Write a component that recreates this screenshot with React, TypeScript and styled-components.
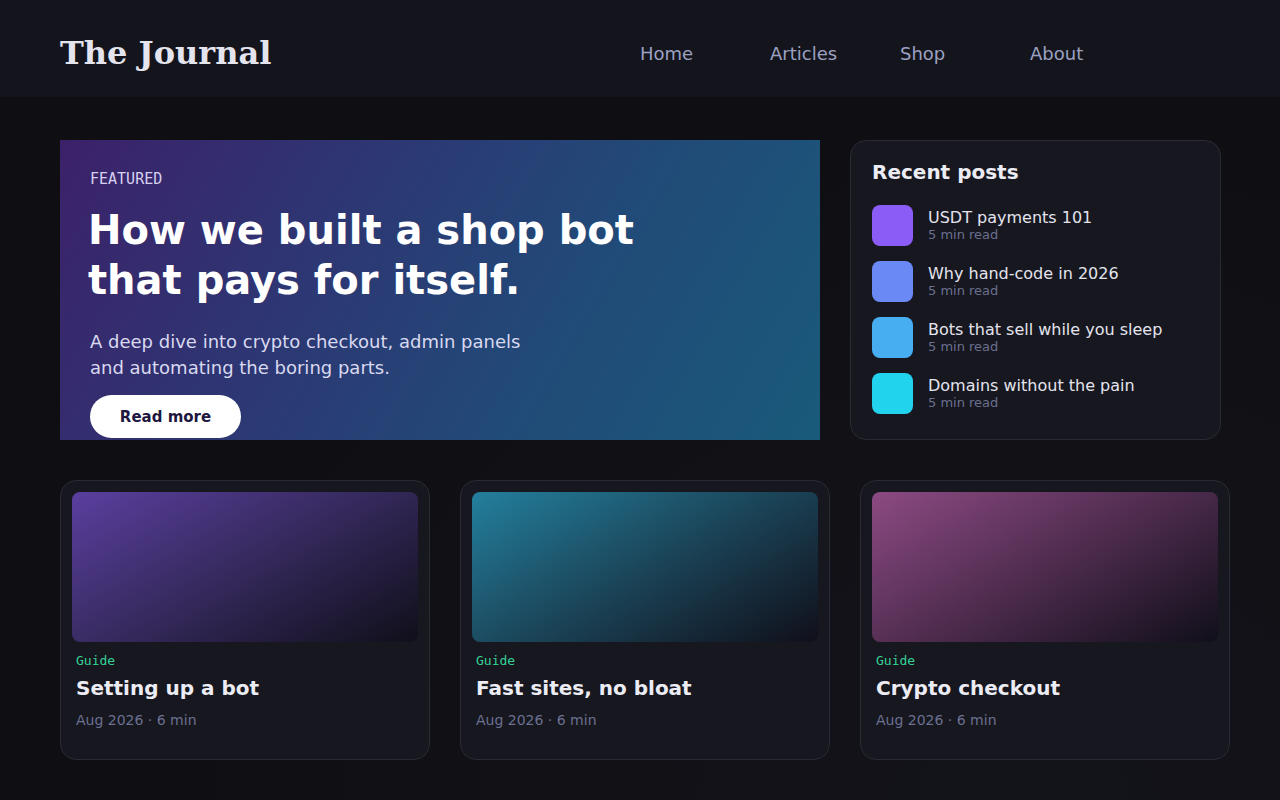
import { FC } from "react";
import styled, { createGlobalStyle } from "styled-components";

const GlobalStyle = createGlobalStyle`
  html, body {
    margin: 0;
    padding: 0;
  }
  body {
    min-height: 800px;
    background: radial-gradient(ellipse at 80% 100%, #13131a 0%, #0f0f13 60%) #0f0f13;
    font-family: "DejaVu Sans", "Liberation Sans", sans-serif;
    color: #e8e8f0;
  }
`;

const Header = styled.header`
  height: 97px;
  box-sizing: border-box;
  background: #14151c;
  display: flex;
  align-items: center;
  padding: 9px 60px 0;
`;

const Logo = styled.h1`
  margin: 0;
  font-family: "DejaVu Serif", "Liberation Serif", serif;
  font-size: 32px;
  font-weight: 700;
  color: #e4e4ee;
`;

const Nav = styled.nav`
  margin-left: auto;
  margin-right: 60px;
  display: grid;
  grid-template-columns: repeat(4, 130px);
`;

const NavLink = styled.a`
  font-size: 18px;
  color: #9ca1c2;
  text-decoration: none;
`;

const Main = styled.main`
  padding: 43px 50px 40px 60px;
`;

const TopRow = styled.section`
  display: flex;
  gap: 30px;
`;

const Hero = styled.article`
  flex: 0 0 760px;
  height: 300px;
  box-sizing: border-box;
  padding: 30px 30px 0;
  overflow: hidden;
  background: linear-gradient(120deg, #3c2169 0%, #2d3773 35%, #214a78 65%, #195a7a 100%);
`;

const Kicker = styled.div`
  font-family: "DejaVu Sans Mono", "Liberation Mono", monospace;
  font-size: 15px;
  color: #d6d0f0;
`;

const HeroTitle = styled.h2`
  margin: 17px 0 0 -2px;
  font-size: 40px;
  line-height: 50px;
  font-weight: 700;
  color: #ffffff;
`;

const HeroText = styled.p`
  margin: 24px 0 0;
  font-size: 18px;
  line-height: 26px;
  color: #d9d9f0;
`;

const ReadMore = styled.button`
  margin-top: 14px;
  width: 151px;
  height: 43px;
  border: none;
  border-radius: 22px;
  background: #ffffff;
  font-family: "DejaVu Sans", sans-serif;
  font-size: 15px;
  font-weight: 700;
  color: #1d1740;
`;

const Sidebar = styled.aside`
  flex: 0 0 371px;
  height: 300px;
  box-sizing: border-box;
  padding: 19px 21px;
  border: 1px solid #2a2a36;
  border-radius: 16px;
  background: #17171f;
`;

const SideTitle = styled.h3`
  margin: 0 0 21px;
  font-size: 20px;
  line-height: 24px;
  font-weight: 700;
  color: #ececf4;
`;

const PostList = styled.ul`
  list-style: none;
  margin: 0;
  padding: 0;
  display: flex;
  flex-direction: column;
  gap: 15px;
`;

const PostItem = styled.li`
  display: flex;
  align-items: center;
  gap: 15px;
`;

const Thumb = styled.div<{ $color: string }>`
  width: 41px;
  height: 41px;
  border-radius: 8px;
  background: ${(p) => p.$color};
  flex-shrink: 0;
`;

const PostTitle = styled.div`
  font-size: 16px;
  line-height: 19px;
  color: #e4e4ee;
`;

const PostMeta = styled.div`
  font-size: 13px;
  line-height: 16px;
  color: #6b7090;
`;

const CardGrid = styled.section`
  margin-top: 40px;
  display: grid;
  grid-template-columns: repeat(3, 370px);
  gap: 30px;
`;

const Card = styled.article`
  height: 280px;
  box-sizing: border-box;
  padding: 11px;
  border: 1px solid #2a2a36;
  border-radius: 16px;
  background: #17171f;
`;

const CardImage = styled.div<{ $from: string; $mid: string }>`
  height: 150px;
  border-radius: 8px;
  background: linear-gradient(150deg, ${(p) => p.$from} 0%, ${(p) => p.$mid} 50%, #100f1a 100%);
`;

const CardBody = styled.div`
  padding: 11px 4px 0;
`;

const Tag = styled.div`
  font-family: "DejaVu Sans Mono", "Liberation Mono", monospace;
  font-size: 13px;
  line-height: 15px;
  color: #34d399;
`;

const CardTitle = styled.h4`
  margin: 7px 0 0;
  font-size: 20px;
  line-height: 26px;
  font-weight: 700;
  color: #ececf4;
`;

const CardMeta = styled.div`
  margin-top: 11px;
  font-size: 14px;
  color: #6b7090;
`;

const recent = [
  { title: "USDT payments 101", color: "#8b5cf6" },
  { title: "Why hand-code in 2026", color: "#6b89f5" },
  { title: "Bots that sell while you sleep", color: "#46aef1" },
  { title: "Domains without the pain", color: "#22d3ee" },
];

const cards = [
  { title: "Setting up a bot", from: "#5a3f9f", mid: "#35295c" },
  { title: "Fast sites, no bloat", from: "#237f9d", mid: "#1b4559" },
  { title: "Crypto checkout", from: "#8c4a82", mid: "#4f2c4f" },
];

const App: FC = () => {
  return (
    <>
      <GlobalStyle />
      <Header>
        <Logo>The Journal</Logo>
        <Nav>
          <NavLink href="#">Home</NavLink>
          <NavLink href="#">Articles</NavLink>
          <NavLink href="#">Shop</NavLink>
          <NavLink href="#">About</NavLink>
        </Nav>
      </Header>
      <Main>
        <TopRow>
          <Hero>
            <Kicker>FEATURED</Kicker>
            <HeroTitle>
              How we built a shop bot
              <br />
              that pays for itself.
            </HeroTitle>
            <HeroText>
              A deep dive into crypto checkout, admin panels
              <br />
              and automating the boring parts.
            </HeroText>
            <ReadMore>Read more</ReadMore>
          </Hero>
          <Sidebar>
            <SideTitle>Recent posts</SideTitle>
            <PostList>
              {recent.map((post) => (
                <PostItem key={post.title}>
                  <Thumb $color={post.color} />
                  <div>
                    <PostTitle>{post.title}</PostTitle>
                    <PostMeta>5 min read</PostMeta>
                  </div>
                </PostItem>
              ))}
            </PostList>
          </Sidebar>
        </TopRow>
        <CardGrid>
          {cards.map((card) => (
            <Card key={card.title}>
              <CardImage $from={card.from} $mid={card.mid} />
              <CardBody>
                <Tag>Guide</Tag>
                <CardTitle>{card.title}</CardTitle>
                <CardMeta>Aug 2026 · 6 min</CardMeta>
              </CardBody>
            </Card>
          ))}
        </CardGrid>
      </Main>
    </>
  );
};

export default App;
